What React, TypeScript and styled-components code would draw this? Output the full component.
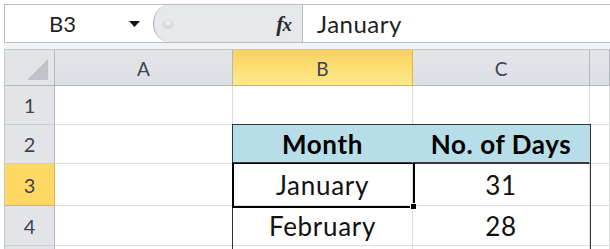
import React from "react";
import styled, { createGlobalStyle } from "styled-components";

const GlobalStyle = createGlobalStyle`
  body {
    margin: 0;
    background: #fff;
    font-family: Lato, "Open Sans", sans-serif;
  }
`;

const Sheet = styled.div`
  width: 610px;
  height: 249px;
  overflow: hidden;
  background: #fff;
  padding: 4px 0 0 4px;
  box-sizing: border-box;
`;

const FormulaBar = styled.div`
  display: flex;
  height: 39px;
  border-top: 1px solid #b9bec6;
  border-left: 1px solid #b9bec6;
  border-bottom: 1px solid #b9bec6;
  box-sizing: border-box;
`;

const NameBox = styled.div`
  width: 148px;
  display: flex;
  align-items: center;
  padding-left: 44px;
  box-sizing: border-box;
  font-size: 22px;
  color: #1f1f1f;
`;

const DropArrow = styled.svg`
  margin-left: auto;
  margin-right: 13px;
`;

const FxArea = styled.div`
  width: 150px;
  display: flex;
  align-items: center;
  background: #e6e8eb;
  border-left: 1px solid #a7acb3;
  border-right: 1px solid #b9bec6;
  border-radius: 16px 0 0 16px / 19px 0 0 19px;
  box-sizing: border-box;
  padding-left: 9px;
`;

const Dot = styled.span`
  width: 10px;
  height: 10px;
  border-radius: 50%;
  background: radial-gradient(circle at 50% 40%, #f4f5f7 0%, #cfd2d6 70%, #b8bcc2 100%);
`;

const FxLabel = styled.span`
  margin-left: auto;
  margin-right: 10px;
  font-family: "Liberation Serif", serif;
  font-style: italic;
  font-weight: bold;
  font-size: 22px;
  line-height: 1;
  color: #2b2b2b;
`;

const FxSub = styled.span`
  font-size: 19px;
  margin-left: -1px;
`;

const FormulaInput = styled.div`
  flex: 1;
  display: flex;
  align-items: center;
  padding-left: 14px;
  font-size: 24px;
  letter-spacing: 0.5px;
  color: #1f1f1f;
`;

const Strip = styled.div`
  height: 6px;
  background: #f2f3f5;
  border-bottom: 1px solid #c3c7cd;
`;

const Grid = styled.div`
  display: grid;
  grid-template-columns: 50px 178px 180px 177px 1fr;
  grid-template-rows: 36px 39px 39px 42px 40px 20px;
  border-left: 1px solid #c3c7cd;
`;

type CellKind = "header" | "active-header" | "row" | "active-row" | "cell" | "title";

const Cell = styled.div<{ $kind?: CellKind; $row: number; $col: number }>`
  grid-row: ${(p) => p.$row};
  grid-column: ${(p) => p.$col};
  display: flex;
  align-items: center;
  justify-content: center;
  box-sizing: border-box;
  border-right: 1px solid #dadcdd;
  border-bottom: 1px solid #dadcdd;
  font-size: 26px;
  letter-spacing: 0.7px;
  color: #111;
  white-space: nowrap;
  ${(p) =>
    p.$kind === "header" &&
    `
    background: linear-gradient(#e3e5e9, #dcdfe4);
    border-right-color: #b3b8bf;
    border-bottom-color: #b3b8bf;
    font-size: 19px;
    letter-spacing: 0;
    color: #3c4450;
    padding-top: 2px;
  `}
  ${(p) =>
    p.$kind === "active-header" &&
    `
    background: linear-gradient(#f8d162 0%, #fcdd70 45%, #ffe98c 100%);
    border-right-color: #e4b04a;
    border-bottom-color: #e4b04a;
    font-size: 19px;
    letter-spacing: 0;
    color: #3c4450;
    padding-top: 2px;
  `}
  ${(p) =>
    p.$kind === "row" &&
    `
    background: #e2e4e8;
    border-right-color: #b3b8bf;
    border-bottom-color: #c9cdd3;
    font-size: 20px;
    letter-spacing: 0;
    color: #3c4450;
  `}
  ${(p) =>
    p.$kind === "active-row" &&
    `
    background: #ffd863;
    border-right-color: #e4b04a;
    border-bottom-color: #e4b04a;
    font-size: 20px;
    letter-spacing: 0;
    color: #3c4450;
  `}
  ${(p) =>
    p.$kind === "title" &&
    `
    background: #b7dee8;
    border-right-color: #b7dee8;
    border-bottom: 2px solid #3a3a3a;
    font-weight: bold;
    letter-spacing: 0.6px;
    color: #000;
  `}
`;

const TableOutline = styled.div`
  grid-column: 3 / 5;
  grid-row: 3 / 7;
  border: 1px solid #333;
  border-bottom: none;
  margin: -1px -1px 0 -1px;
  pointer-events: none;
  z-index: 1;
`;

const Selection = styled.div`
  grid-column: 3 / 4;
  grid-row: 4 / 5;
  position: relative;
  margin: -1px -2px -2px -1px;
  border: 2px solid #000;
  border-top-width: 1px;
  z-index: 2;
  pointer-events: none;
`;

const FillHandle = styled.span`
  position: absolute;
  right: -4px;
  bottom: -4px;
  width: 5px;
  height: 5px;
  background: #000;
  border: 1px solid #fff;
`;

const Corner = styled.div`
  grid-row: 1;
  grid-column: 1;
  background: #e2e4e8;
  border-right: 1px solid #b3b8bf;
  border-bottom: 1px solid #b3b8bf;
  box-sizing: border-box;
  display: flex;
  align-items: flex-end;
  justify-content: flex-end;
  padding: 0 6px 5px 0;
`;

const columns = ["A", "B", "C", ""];

// the last row is only a sliver at the bottom edge, so its number stays hidden
const rows: { n: string; cells: string[]; title?: boolean }[] = [
  { n: "1", cells: ["", "", "", ""] },
  { n: "2", cells: ["", "Month", "No. of Days", ""], title: true },
  { n: "3", cells: ["", "January", "31", ""] },
  { n: "4", cells: ["", "February", "28", ""] },
  { n: "", cells: ["", "", "", ""] },
];

export default function App() {
  return (
    <>
      <GlobalStyle />
      <Sheet>
        <FormulaBar>
          <NameBox>
            B3
            <DropArrow width="11" height="6" viewBox="0 0 11 6">
              <path d="M0 0 H11 L5.5 6 Z" fill="#111" />
            </DropArrow>
          </NameBox>
          <FxArea>
            <Dot />
            <FxLabel>
              f<FxSub>x</FxSub>
            </FxLabel>
          </FxArea>
          <FormulaInput>January</FormulaInput>
        </FormulaBar>
        <Strip />
        <Grid>
          <Corner>
            <svg width="21" height="21" viewBox="0 0 21 21">
              <path d="M21 0 V21 H0 Z" fill="#bfc3c8" />
            </svg>
          </Corner>
          {columns.map((c, i) => (
            <Cell
              key={c || "D"}
              $row={1}
              $col={i + 2}
              $kind={c === "B" ? "active-header" : "header"}
            >
              {c}
            </Cell>
          ))}
          {rows.map((r, ri) => (
            <React.Fragment key={ri}>
              <Cell $row={ri + 2} $col={1} $kind={r.n === "3" ? "active-row" : "row"}>
                {r.n}
              </Cell>
              {r.cells.map((v, i) => (
                <Cell
                  key={i}
                  $row={ri + 2}
                  $col={i + 2}
                  $kind={r.title && (i === 1 || i === 2) ? "title" : "cell"}
                >
                  {v}
                </Cell>
              ))}
            </React.Fragment>
          ))}
          <TableOutline />
          <Selection>
            <FillHandle />
          </Selection>
        </Grid>
      </Sheet>
    </>
  );
}
